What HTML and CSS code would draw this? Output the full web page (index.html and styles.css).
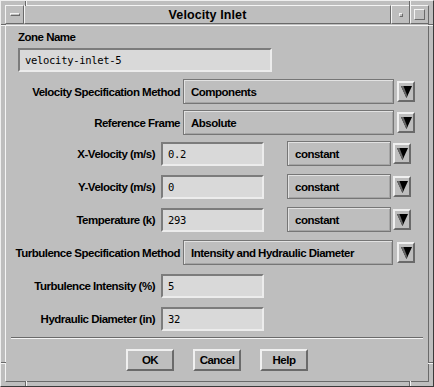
FILE: index.html
```html
<!DOCTYPE html>
<html lang="en">
<head>
	<meta charset="UTF-8">
	<title>Velocity Inlet</title>
	<link rel="stylesheet" href="styles.css">
</head>
<body>

	<div class="window">
		<span class="notch notch-v" style="left:24px; top:0"></span>
		<span class="notch notch-v" style="left:408px; top:0"></span>
		<span class="notch notch-v" style="left:24px; bottom:0"></span>
		<span class="notch notch-v" style="left:408px; bottom:0"></span>
		<span class="notch notch-h" style="top:23px; left:0"></span>
		<span class="notch notch-h" style="top:23px; right:0"></span>
		<span class="notch notch-h" style="top:361px; left:0"></span>
		<span class="notch notch-h" style="top:361px; right:0"></span>

		<div class="titlebar">
			<div class="tb-btn"><span class="menu-bar"></span></div>
			<div class="tb-title">Velocity Inlet</div>
			<div class="tb-btn"><span class="min-box"></span></div>
			<div class="tb-btn"><span class="max-box"></span></div>
		</div>

		<div class="content">
			<div class="zone-label">Zone Name</div>
			<div class="field zone-field">velocity-inlet-5</div>

			<div class="row first">
				<div class="lbl wide">Velocity Specification Method</div>
				<div class="opt opt-long">Components</div>
				<div class="arrow arrow-long"><svg width="11" height="12" viewBox="0 0 11 12"><polygon points="0,0 11,0 5.5,12" fill="#000"/><polygon points="0,0 2.5,0 6,9 5.5,12" fill="#6a6a6a"/></svg></div>
			</div>

			<div class="row second">
				<div class="lbl wide">Reference Frame</div>
				<div class="opt opt-long">Absolute</div>
				<div class="arrow arrow-long"><svg width="11" height="12" viewBox="0 0 11 12"><polygon points="0,0 11,0 5.5,12" fill="#000"/><polygon points="0,0 2.5,0 6,9 5.5,12" fill="#6a6a6a"/></svg></div>
			</div>

			<div class="row third">
				<div class="lbl narrow">X-Velocity (m/s)</div>
				<div class="field num-field">0.2</div>
				<div class="opt opt-short">constant</div>
				<div class="arrow arrow-short"><svg width="11" height="12" viewBox="0 0 11 12"><polygon points="0,0 11,0 5.5,12" fill="#000"/><polygon points="0,0 2.5,0 6,9 5.5,12" fill="#6a6a6a"/></svg></div>
			</div>

			<div class="row">
				<div class="lbl narrow">Y-Velocity (m/s)</div>
				<div class="field num-field">0</div>
				<div class="opt opt-short">constant</div>
				<div class="arrow arrow-short"><svg width="11" height="12" viewBox="0 0 11 12"><polygon points="0,0 11,0 5.5,12" fill="#000"/><polygon points="0,0 2.5,0 6,9 5.5,12" fill="#6a6a6a"/></svg></div>
			</div>

			<div class="row">
				<div class="lbl narrow">Temperature (k)</div>
				<div class="field num-field">293</div>
				<div class="opt opt-short">constant</div>
				<div class="arrow arrow-short"><svg width="11" height="12" viewBox="0 0 11 12"><polygon points="0,0 11,0 5.5,12" fill="#000"/><polygon points="0,0 2.5,0 6,9 5.5,12" fill="#6a6a6a"/></svg></div>
			</div>

			<div class="row">
				<div class="lbl wide">Turbulence Specification Method</div>
				<div class="opt opt-turb">Intensity and Hydraulic Diameter</div>
				<div class="arrow arrow-turb"><svg width="11" height="12" viewBox="0 0 11 12"><polygon points="0,0 11,0 5.5,12" fill="#000"/><polygon points="0,0 2.5,0 6,9 5.5,12" fill="#6a6a6a"/></svg></div>
			</div>

			<div class="row">
				<div class="lbl narrow">Turbulence Intensity (%)</div>
				<div class="field num-field">5</div>
			</div>

			<div class="row">
				<div class="lbl narrow">Hydraulic Diameter (in)</div>
				<div class="field num-field">32</div>
			</div>

			<div class="separator"></div>

			<div class="buttons">
				<div class="btn">OK</div>
				<div class="btn">Cancel</div>
				<div class="btn">Help</div>
			</div>
		</div>
	</div>

</body>
</html>
```

FILE: styles.css
```css
body {
	margin: 0;
	background: #bebebe;
	font-family: "Liberation Sans", Arial, sans-serif;
	color: #000;
}
.window {
	position: relative;
	width: 434px;
	height: 387px;
	box-sizing: border-box;
	border: 1px solid;
	border-color: #efefef #3a3a3a #3a3a3a #efefef;
	padding: 4px;
	background: #bebebe;
	display: flex;
	flex-direction: column;
	gap: 1px;
}
.notch {
	position: absolute;
	box-sizing: border-box;
}
.notch-v {
	width: 2px;
	height: 5px;
	border-left: 1px solid #6a6a6a;
	border-right: 1px solid #f4f4f4;
}
.notch-h {
	width: 5px;
	height: 2px;
	border-top: 1px solid #6a6a6a;
	border-bottom: 1px solid #f4f4f4;
}

/* title bar */
.titlebar {
	display: flex;
	height: 19px;
	flex-shrink: 0;
}
.tb-btn, .tb-title {
	box-sizing: border-box;
	border: 1px solid;
	border-color: #f4f4f4 #6a6a6a #6a6a6a #f4f4f4;
	display: flex;
	align-items: center;
	justify-content: center;
}
.tb-btn {
	width: 19px;
}
.tb-title {
	flex: 1;
	font-weight: bold;
	font-size: 12.5px;
	letter-spacing: 0.1px;
}
.menu-bar {
	width: 10px;
	height: 3px;
	box-sizing: border-box;
	border: 1px solid;
	border-color: #f4f4f4 #6a6a6a #6a6a6a #f4f4f4;
}
.min-box {
	width: 4px;
	height: 4px;
	box-sizing: border-box;
	border: 1px solid;
	border-color: #f4f4f4 #6a6a6a #6a6a6a #f4f4f4;
}
.max-box {
	width: 11px;
	height: 11px;
	box-sizing: border-box;
	border: 1px solid;
	border-color: #f4f4f4 #6a6a6a #6a6a6a #f4f4f4;
}

/* dialog body */
.content {
	flex: 1;
	box-sizing: border-box;
	border: 1px solid;
	border-color: #f4f4f4 #6a6a6a #6a6a6a #f4f4f4;
	padding: 4px 5px 10px 12px;
	font-size: 11.5px;
	font-weight: bold;
	letter-spacing: -0.5px;
}
.zone-label {
	height: 14px;
	line-height: 14px;
}
.field {
	box-sizing: border-box;
	height: 24px;
	border: 2px solid;
	border-color: #7c7c7c #ececec #ececec #7c7c7c;
	background: #d9d9d9;
	padding-left: 5px;
	display: flex;
	align-items: center;
	font-family: "DejaVu Sans Mono", "Liberation Mono", monospace;
	font-weight: normal;
	font-size: 10.5px;
	letter-spacing: -0.3px;
}
.zone-field {
	width: 254px;
	margin-top: 4px;
}
.row {
	display: flex;
	align-items: center;
	height: 25px;
	margin-top: 8px;
}
.row.first {
	margin-top: 7px;
}
.row.second, .row.third {
	margin-top: 6px;
}
.lbl {
	display: flex;
	justify-content: flex-end;
	white-space: nowrap;
	flex-shrink: 0;
}
.lbl.wide {
	width: 162px;
	margin-right: 3px;
}
.lbl.narrow {
	width: 137px;
	margin-right: 6px;
}
.num-field {
	width: 103px;
	margin-right: 23px;
}
.opt {
	box-sizing: border-box;
	height: 25px;
	border: 1px solid #767676;
	box-shadow: inset 1px 1px 0 #e2e2e2, inset -1px -1px 0 #a4a4a4;
	padding-left: 7px;
	display: flex;
	align-items: center;
	white-space: nowrap;
}
.opt-long {
	width: 211px;
	margin-right: 3px;
}
.opt-short {
	width: 104px;
	margin-right: 2px;
}
.opt-turb {
	width: 210px;
	margin-right: 4px;
}
.arrow {
	box-sizing: border-box;
	width: 18px;
	height: 21px;
	border: 2px solid;
	border-color: #f0f0f0 #6a6a6a #6a6a6a #f0f0f0;
	display: flex;
	align-items: center;
	justify-content: center;
	padding-top: 1px;
}
.separator {
	height: 2px;
	box-sizing: border-box;
	margin: 6px 0 0 -7px;
	border-top: 1px solid #6a6a6a;
	border-bottom: 1px solid #f4f4f4;
}
.buttons {
	display: flex;
	gap: 19px;
	margin: 10px 0 0 108px;
}
.btn {
	box-sizing: border-box;
	width: 48px;
	height: 22px;
	border: 2px solid;
	border-color: #f0f0f0 #6a6a6a #6a6a6a #f0f0f0;
	display: flex;
	align-items: center;
	justify-content: center;
}
```
